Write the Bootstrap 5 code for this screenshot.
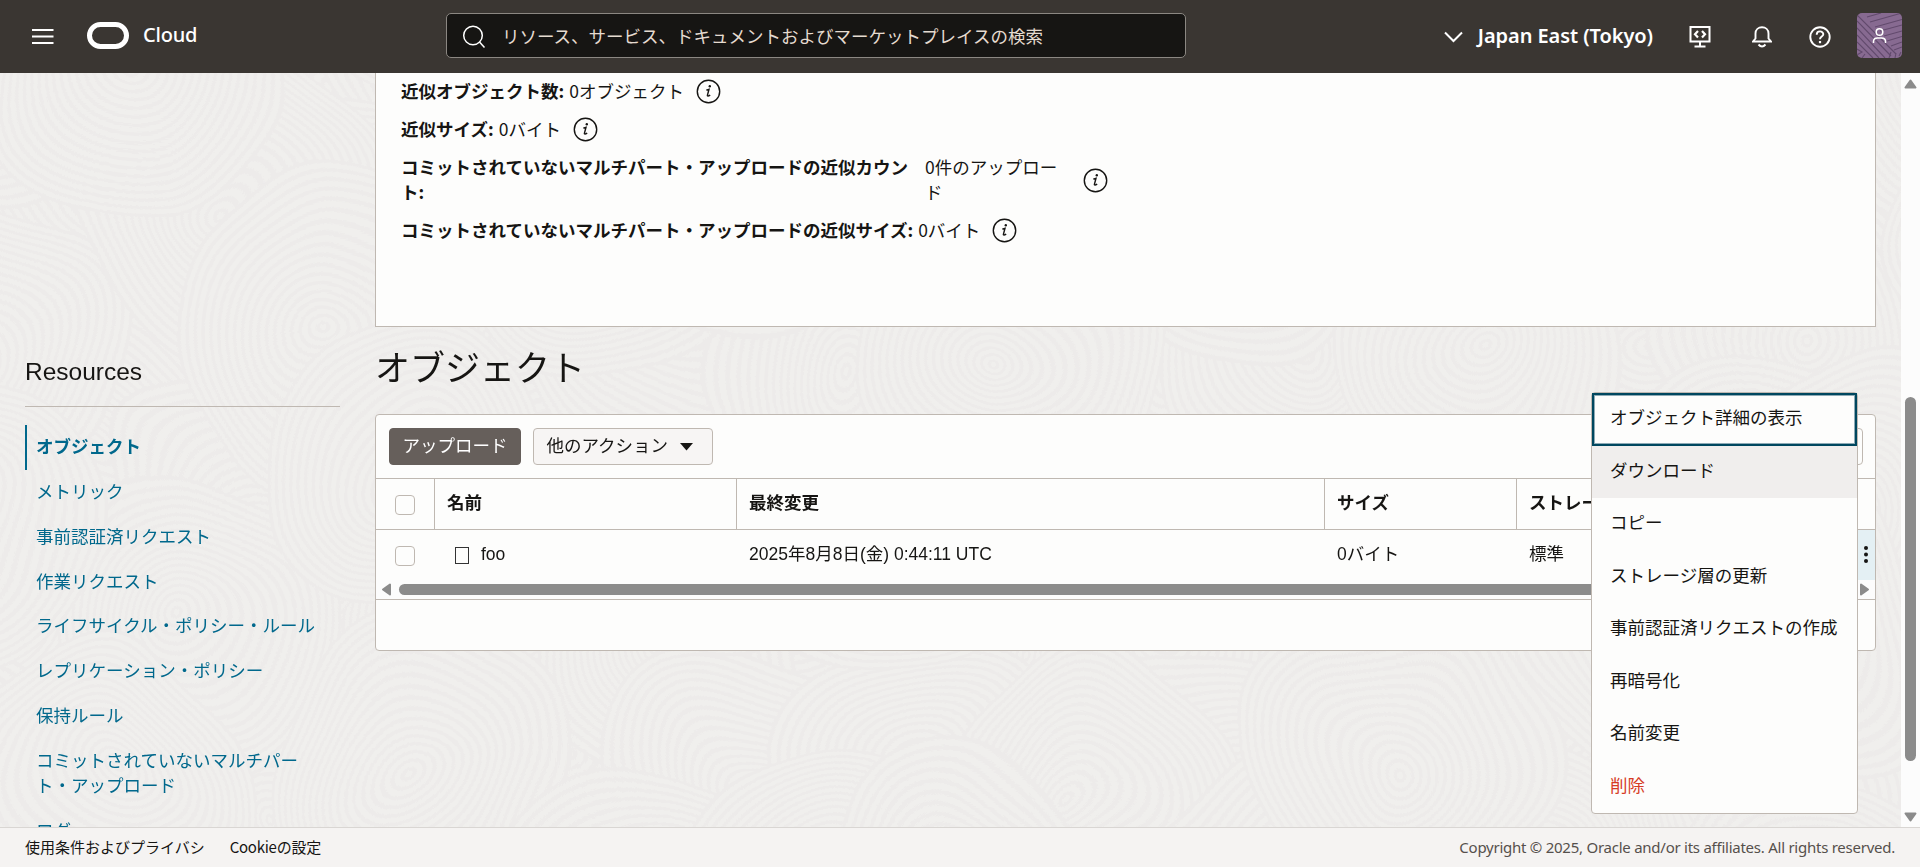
<!DOCTYPE html>
<html lang="ja">
<head>
<meta charset="utf-8">
<title>オブジェクト</title>
<link href="https://cdn.jsdelivr.net/npm/bootstrap@5.3.0/dist/css/bootstrap.min.css" rel="stylesheet">
<style>
:root{--line:#bfb8b1;--ink:#161513;--teal:#00688c;--panel:#fdfdfc}
html,body{height:100%;overflow:hidden}
body{font-family:"Noto Sans CJK JP",sans-serif;font-size:17.5px;line-height:25px;color:var(--ink);background:#f0eeed}
svg{display:block;flex:none}
.latin{font-family:"Liberation Sans","Noto Sans CJK JP",sans-serif}
.topbar{height:73px;background:#3a3632;color:#fff;padding:0 18px 0 32px}
.menu-icon{margin-bottom:1px}
.logo{margin:-3px 0 0 33px}
.brand{font:500 20px/25px "Noto Sans",sans-serif;letter-spacing:-.2px;margin:-4px 0 0 14px;width:54px}
.region{font:600 20px/25px "Noto Sans",sans-serif;white-space:nowrap;letter-spacing:-.07px;margin:-2px 36px 0 14px}
.searchbox{width:740px;height:45px;margin:-2px 0 0 249px;background:#161513;border:1px solid #8b8782;border-radius:5px;padding-left:15px;color:#e5dbd0;gap:16px}
.avatar{width:45px;height:45px;border-radius:5px;overflow:hidden;margin:-2px 0 0 26px}
.viewport{height:754px;overflow:hidden}
.swirls{left:0;top:0;z-index:0}
.side{width:340px;padding:284px 0 0 25px}
.side h2{font-size:24.5px;line-height:30px;margin:0;padding-bottom:19px;border-bottom:1px solid var(--line);font-weight:400}
.side .nav{padding-top:18px}
.side .nav-link{color:var(--teal);padding:8px 15px 11.85px 9px;border-left:2px solid transparent}
.side .nav-link.active{font-weight:700;border-color:var(--teal)}
.content{width:1501px;margin-left:35px}
.info{height:254px;background:var(--panel);border:1px solid var(--line);border-top:0;padding:4px 25px 0}
.info dl,.info dd{margin:0}
.info dt{font-weight:700}
.fact{height:26px;margin-bottom:12px}
.fact dd{padding-left:5px}
.fact-tall{height:50px;margin-top:13px}
.fact-tall dt{width:524px;padding-right:16px}
.fact-tall dd{width:146px;padding-left:0}
.ic{margin:3px 0 0 12px}
.title{font-size:35px;line-height:44px;margin:17px 0 26px;font-weight:400}
.gridbox{background:var(--panel);border:1px solid var(--line);border-radius:4px;height:237px}
.tools{height:64px;padding:0 13px;border-bottom:1px solid var(--line);gap:12px}
.tools .btn{font-size:17.5px;line-height:25px;height:37px;padding:3px 12.5px 7px;border-radius:4px}
.btn-up{background:#665f5b!important;color:#fff!important;border:1px solid #665f5b}
.btn-other{background:#f7f5f4!important;border:1px solid var(--line)!important;color:var(--ink)!important;width:180px;gap:12px}
.btn-other svg{margin-top:5px}
.trow{display:grid;grid-template-columns:59px 302px 588px 192px 1fr}
.thead-row{height:51px;border-bottom:1px solid var(--line);font-weight:700}
.trow>div{padding:12px 0 0 12px}
.thead-row>div{padding-top:10px;border-left:1px solid var(--line);margin-left:-1px}
.trow>div:first-child{padding:16px 0 0 19px;border-left:0;margin-left:0}
.trow .form-check-input{margin:0;width:20px;height:20px;display:block;border-color:var(--line);border-radius:4px;background:var(--panel)}
.tofu{width:14px;height:17px;border:1px solid #333;margin:5px 12px 0 8px}
.trow>.dots{width:18px;height:50px;background:#e4f0f4;right:0;top:0;padding:16px 0 0 6px}
.hscroll{height:20px;border-bottom:1px solid var(--line);padding:0 5px 1px 6px;gap:8px;background:#fcfcfc}
.thumb{background:#8b8b8b;border-radius:6px}
.thumb-x{height:11px}
.thumb-y{width:11px;height:364px;margin-top:308px}
.vscroll{width:19px;right:0;top:0;height:754px;background:#fcfcfc;padding:6px 0 5px;z-index:2}
.actions{left:1591px;top:392px;width:267px;height:422px;background:var(--panel);border:1px solid var(--line);border-radius:4px;z-index:5}
.actions a{height:52.5px;padding:11px 0 0 18px;display:block;color:var(--ink);text-decoration:none;white-space:nowrap}
.actions a.focus-item{height:52.5px;border:2px solid #00475f;padding:9px 0 0 16px;box-shadow:inset 0 0 0 1px #8daab5}
.actions a.hov{background:#f0eeed}
.actions a.danger-item{color:#d63b25}
.ghost{width:20px;height:37px;border:1px solid var(--line);border-radius:4px;margin-right:-1px}
.bottombar{height:40px;background:#f5f3f2;border-top:1px solid #d9d6d3;font-size:15px;padding:0 25px 2px;gap:25px}
.cookie{letter-spacing:-.25px}
.legal{font:15px/20px "Noto Sans",sans-serif;color:#55504c;letter-spacing:-.25px}
</style>
</head>
<body class="d-flex flex-column">
<header class="topbar d-flex align-items-center flex-shrink-0">
  <svg class="menu-icon" width="22" height="16" viewBox="0 0 22 16" stroke="#fff" stroke-width="2"><path d="M0 2H21.500M0 8.500H21.500M0 15H21.500"/></svg>
  <svg class="logo" width="42" height="27" viewBox="0 0 42 27" fill="none" stroke="#fff" stroke-width="5"><rect x="2.500" y="2.500" width="37" height="22" rx="11"/></svg>
  <span class="brand">Cloud</span>
  <div class="searchbox d-flex align-items-center">
    <svg width="24" height="24" viewBox="0 0 24 24" fill="none" stroke="#fff" stroke-width="1.500"><circle cx="11" cy="11.500" r="9.300"/><path d="M17.500 18L22.500 23.500"/></svg>
    <span>リソース、サービス、ドキュメントおよびマーケットプレイスの検索</span>
  </div>
  <div class="d-flex align-items-center ms-auto">
    <svg width="20" height="12" viewBox="0 0 20 12" fill="none" stroke="#fff" stroke-width="2"><path d="M1 1.500L9.500 10L18 1.500"/></svg>
    <span class="region">Japan East (Tokyo)</span>
    <svg width="22" height="22" viewBox="0 0 22 22" fill="none" stroke="#fff" stroke-width="2"><path d="M1.500 1H20.500V15.500H1.500ZM11 16V20M5.500 20.500H16.500"/><path d="M9 5L6 8.250L9 11.500M13 5L16 8.250L13 11.500" stroke-width="2.200"/></svg>
    <svg style="margin-left:41px" width="20" height="22" viewBox="0 0 20 22" fill="none" stroke="#fff" stroke-width="1.900"><path d="M1 15.500H19L16.500 12.500V7.500C16.500 3.500 13.500 1.200 10 1.200S3.500 3.500 3.500 7.500V12.500L1 15.500Z"/><path d="M6.500 18.500Q10 22.500 13.500 18.500"/></svg>
    <svg style="margin-left:37px" width="22" height="22" viewBox="0 0 22 22" fill="none" stroke="#fff" stroke-width="1.900"><circle cx="11" cy="11" r="9.700"/><path d="M7.700 8.700C7.700 4.300 14.300 4.500 14.300 8.300C14.300 10.700 11 10.500 11 13.200"/><path d="M11 15V17.200" stroke-width="2.200"/></svg>
    <svg class="avatar" viewBox="0 0 45 45" fill="none"><rect width="45" height="45" fill="#876a91"/><path stroke="#624a6d" stroke-width="1.100" d="M10 4L24 0M13 9L45 0M18 14L45 6.500M23 18L45 12M27 23L45 18M30 28L45 23.500M34 33L45 29M37 37L45 34M0 2L39 41M0 8L34 43M0 15L28 45M0 22L22 45M0 29L16 45M0 36L5 39L0 42M5 45L8 41M32 45L34 39M38 45L39 40M42 43L44 39"/><g stroke="#fff" stroke-width="1.500"><circle cx="22.500" cy="19" r="3.300"/><path d="M16.500 30V28.500Q16.500 25 20.500 25H24.500Q28.500 25 28.500 28.500V30"/></g></svg>
  </div>
</header>

<main class="viewport position-relative d-flex flex-shrink-0">
  <svg class="swirls position-absolute" width="1901" height="754" fill="none">
    <defs>
      <filter id="wobble" x="-5%" y="-5%" width="110%" height="110%"><feTurbulence type="fractalNoise" baseFrequency=".006" numOctaves="1" seed="4"/><feDisplacementMap in="SourceGraphic" scale="110" xChannelSelector="R" yChannelSelector="G"/></filter>
      <g id="rings"><circle r="150" fill="#f0efed"/><g id="lines" stroke="#edebea" stroke-width="3.500"></g></g>
    </defs>
    <g id="field" filter="url(#wobble)"></g>
  </svg>
  <aside class="side position-relative flex-shrink-0">
    <h2 class="latin">Resources</h2>
    <nav class="nav flex-column">
      <a class="nav-link active">オブジェクト</a>
      <a class="nav-link">メトリック</a>
      <a class="nav-link">事前認証済リクエスト</a>
      <a class="nav-link">作業リクエスト</a>
      <a class="nav-link">ライフサイクル・ポリシー・ルール</a>
      <a class="nav-link">レプリケーション・ポリシー</a>
      <a class="nav-link">保持ルール</a>
      <a class="nav-link">コミットされていないマルチパート・アップロード</a>
      <a class="nav-link">ログ</a>
    </nav>
  </aside>
  <section class="content position-relative flex-shrink-0">
    <div class="info">
      <dl>
        <div class="fact d-flex align-items-center"><dt>近似オブジェクト数:</dt><dd>0オブジェクト</dd><svg class="ic" width="25" height="25"><use href="#i"/></svg></div>
        <div class="fact d-flex align-items-center"><dt>近似サイズ:</dt><dd>0バイト</dd><svg class="ic" width="25" height="25"><use href="#i"/></svg></div>
        <div class="fact fact-tall d-flex align-items-center"><dt>コミットされていないマルチパート・アップロードの近似カウント:</dt><dd>0件のアップロード</dd><svg class="ic" width="25" height="25"><use href="#i"/></svg></div>
        <div class="fact d-flex align-items-center"><dt>コミットされていないマルチパート・アップロードの近似サイズ:</dt><dd>0バイト</dd><svg class="ic" width="25" height="25"><use href="#i"/></svg></div>
      </dl>
    </div>
    <h1 class="title">オブジェクト</h1>
    <div class="gridbox">
      <div class="tools d-flex align-items-center">
        <button class="btn btn-up">アップロード</button>
        <button class="btn btn-other d-flex align-items-center">他のアクション<svg width="13" height="8"><path d="M0 0H13L6.500 7.500Z" fill="#161513"/></svg></button>
        <span class="ghost ms-auto"></span>
      </div>
      <div class="trow thead-row"><div><input type="checkbox" class="form-check-input"></div><div>名前</div><div>最終変更</div><div>サイズ</div><div>ストレージ層</div></div>
      <div class="trow position-relative latin" style="height:50px"><div><input type="checkbox" class="form-check-input"></div><div class="d-flex"><span class="tofu"></span>foo</div><div>2025年8月8日(金) 0:44:11 UTC</div><div>0バイト</div><div>標準</div>
        <div class="dots position-absolute"><svg width="6" height="20" fill="#161513"><circle cx="3" cy="2" r="2"/><circle cx="3" cy="8.500" r="2"/><circle cx="3" cy="15" r="2"/></svg></div>
      </div>
      <div class="hscroll d-flex align-items-center">
        <svg width="9" height="13"><path d="M8 1.500V11.500L1 6.500Z" fill="#8b8b8b" stroke="#8b8b8b" stroke-width="2" stroke-linejoin="round"/></svg>
        <div class="thumb thumb-x flex-grow-1"></div>
        <svg width="10" height="13"><path d="M1 1.500V11.500L8 6.500Z" fill="#8b8b8b" stroke="#8b8b8b" stroke-width="2" stroke-linejoin="round"/></svg>
      </div>
    </div>
  </section>
  <div class="vscroll position-absolute d-flex flex-column align-items-center">
    <svg width="13" height="10"><path d="M6.500 1.500L11.500 8.500H1.500Z" fill="#8b8b8b" stroke="#8b8b8b" stroke-width="2" stroke-linejoin="round"/></svg>
    <div class="thumb thumb-y"></div>
    <svg class="mt-auto" width="13" height="10"><path d="M6.500 8.500L11.500 1.500H1.500Z" fill="#8b8b8b" stroke="#8b8b8b" stroke-width="2" stroke-linejoin="round"/></svg>
  </div>
</main>
<div class="actions position-absolute">
  <a class="focus-item">オブジェクト詳細の表示</a><a class="hov">ダウンロード</a><a>コピー</a><a>ストレージ層の更新</a><a>事前認証済リクエストの作成</a><a>再暗号化</a><a>名前変更</a><a class="danger-item">削除</a>
</div>
<footer class="bottombar d-flex align-items-center flex-shrink-0">
  <span>使用条件およびプライバシ</span><span class="cookie">Cookieの設定</span><span class="legal ms-auto">Copyright © 2025, Oracle and/or its affiliates. All rights reserved.</span>
</footer>
<svg class="position-absolute" width="0" height="0"><defs><g id="i"><circle cx="12.500" cy="12.500" r="11.200" fill="none" stroke="#161513" stroke-width="1.400"/><path d="M10.300 11.200L13 10.300L11.400 16.300Q11.200 18 14.200 16.200" fill="none" stroke="#161513" stroke-width="1.400"/><circle cx="13.800" cy="7.300" r="1.200" fill="#161513"/></g></defs></svg>
<script src="https://cdn.jsdelivr.net/npm/bootstrap@5.3.0/dist/js/bootstrap.bundle.min.js"></script>
<script>
// Overlapping ring clusters form the engraved page texture.
let rings='';for(let r=5;r<=150;r+=8.5)rings+=`<circle r="${r}"/>`;
document.getElementById('lines').innerHTML=rings;
let out='',seed=7;const rnd=()=>(seed=(seed*16807)%2147483647)/2147483647;
const spots=[];
for(let y=-1;y<7;y++)for(let x=-1;x<13;x++)spots.push([rnd(),x*165+(y%2)*82+rnd()*60-30,y*140+rnd()*60-30]);
spots.sort((a,b)=>a[0]-b[0]).forEach(s=>out+=`<use href="#rings" x="${Math.round(s[1])}" y="${Math.round(s[2])}"/>`);
document.getElementById('field').innerHTML=out;
</script>
</body>
</html>
